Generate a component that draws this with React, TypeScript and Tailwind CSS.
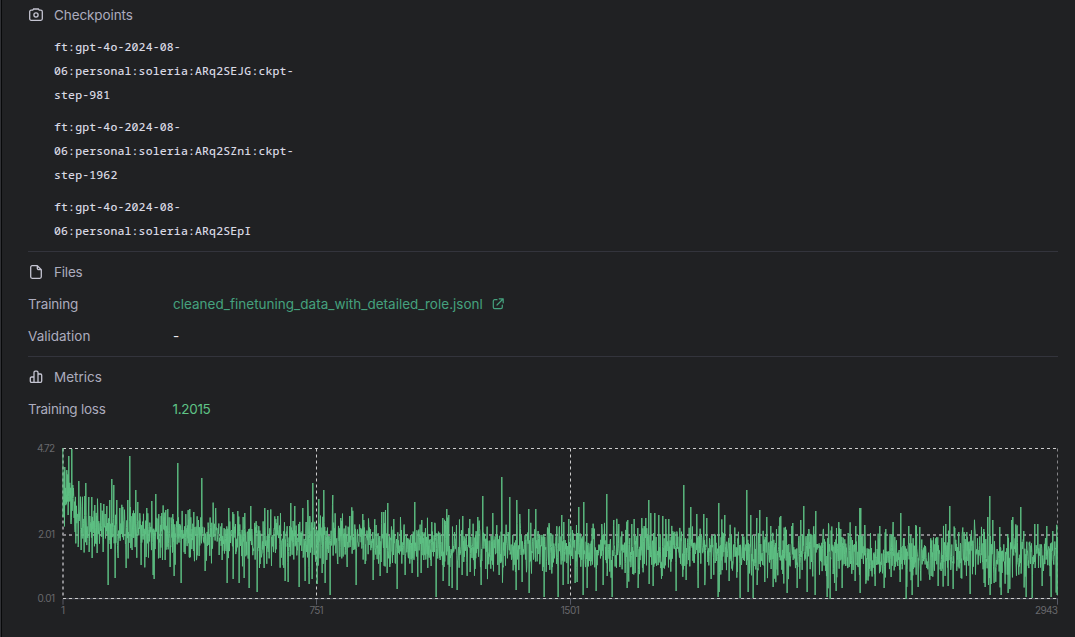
import React from "react";

const SANS = "font-['Inter','Liberation_Sans',sans-serif]";

// [x, y] extremes of the loss curve, in chart pixels
const PEAKS: number[][] = [
  [63,448],[65,467],[69,456],[72,449],[73,485],[79,481],[86,483],[89,497],[92,497],[95,505],[98,512],[101,503],[104,504],[107,506],[110,500],[112,479],[114,485],[117,500],[120,508],[123,507],[128,500],[130,456],[136,490],[138,502],[147,508],[152,501],[156,494],[162,513],[166,510],[168,509],[173,514],[178,463],[190,509],[194,512],[202,478],[216,508],[229,508],[233,512],[238,511],[245,513],[251,506],[265,508],[268,510],
  [278,516],[291,503],[295,506],[303,508],[308,500],[313,483],[319,499],[324,490],[333,495],[341,518],[350,516],[363,514],[382,512],[384,512],[388,503],[394,519],[415,502],[422,520],[432,522],[443,518],[447,509],[449,515],[463,516],[470,519],[478,517],[483,496],[493,513],[502,477],[510,497],[517,500],[520,514],[529,509],[536,509],
  [562,515],[564,522],[569,519],[579,507],[584,502],[587,523],[602,524],[607,494],[614,520],[619,524],[628,520],[632,524],[642,518],[646,518],[649,500],[651,513],[655,513],[659,515],[663,516],[666,519],[669,519],[684,485],[691,507],[697,514],[704,514],[707,518],[719,503],[725,515],[747,490],[751,515],[757,518],[760,510],[767,517],[771,526],[781,516],[793,523],
  [801,520],[804,506],[809,529],[816,511],[829,525],[841,529],[856,526],[860,508],[861,508],[865,525],[880,526],[886,529],[901,513],[909,526],[916,525],[920,527],[946,524],[950,506],[955,528],[959,532],[967,532],[975,528],[984,529],[988,517],[990,496],[993,520],[1000,527],[1012,520],[1013,517],[1017,529],[1021,507],[1024,531],[1035,524],[1038,524],[1047,526],[1053,531],
];
const VALLEYS: number[][] = [
  [63,517],[68,515],[71,524],[75,532],[78,547],[81,550],[89,552],[92,558],[97,553],[103,552],[108,585],[115,578],[118,558],[126,568],[132,550],[141,565],[146,557],[153,575],[154,579],[165,560],[170,567],[174,576],[181,583],[199,556],[205,571],[222,560],[227,583],[233,579],[239,583],[244,578],[249,588],[257,592],[260,564],[264,568],
  [285,581],[288,582],[299,587],[305,581],[309,584],[312,579],[317,584],[322,573],[325,583],[330,595],[347,567],[356,585],[365,564],[373,580],[380,576],[387,573],[397,589],[405,575],[412,573],[421,573],[436,597],[443,581],[449,586],[452,588],[457,590],[462,575],[470,572],[481,585],[499,575],[516,590],[522,582],[529,593],
  [544,597],[558,597],[563,585],[568,584],[575,583],[577,582],[583,595],[587,588],[596,591],[603,585],[607,576],[612,597],[627,588],[635,573],[638,588],[649,584],[653,586],[662,576],[676,591],[686,580],[698,588],[705,579],[711,579],[718,597],[719,592],[729,581],[740,598],[748,592],[753,598],[757,585],[773,587],[787,593],[797,588],
  [807,592],[815,595],[827,597],[830,599],[836,591],[842,588],[855,581],[860,593],[866,582],[875,586],[884,588],[891,577],[900,582],[906,599],[912,595],[918,587],[931,576],[938,586],[948,586],[953,589],[961,578],[970,594],[984,583],[985,587],[990,595],[994,583],[1001,595],[1008,593],[1026,597],[1032,598],[1042,586],[1051,597],[1057,595],
];

function rng(seed: number) {
  let s = seed;
  return () => {
    s = (s * 1664525 + 1013904223) % 4294967296;
    return s / 4294967296;
  };
}

function mean(x: number) {
  const knots = [[63,490],[70,495],[76,516],[90,526],[130,531],[200,536],[300,539],[450,546],[600,549],[750,551],[900,554],[1058,556]];
  for (let i = 1; i < knots.length; i++) {
    const [a, ya] = knots[i - 1];
    const [b, yb] = knots[i];
    if (x <= b) return ya + ((x - a) / (b - a)) * (yb - ya);
  }
  return 556;
}

function buildPath() {
  const rand = rng(42);
  const hi = new Map(PEAKS.map(([x, y]) => [x, y]));
  const lo = new Map(VALLEYS.map(([x, y]) => [x, y]));
  const pts: string[] = [];
  for (let x = 63; x <= 1057; x++) {
    const m = mean(x);
    const spread = 18 + rand() * 12;
    for (let k = 0; k < 3; k++) {
      let y = m + (rand() + rand() + rand() - 1.5) * spread;
      if (k === 0 && hi.has(x)) y = hi.get(x)!;
      if (k === 1 && lo.has(x)) y = lo.get(x)!;
      pts.push(`${(x - 0.2 + k * 0.34).toFixed(2)},${y.toFixed(1)}`);
    }
  }
  return "M" + pts.join("L");
}

const CURVE = buildPath();

function LossChart() {
  return (
    <svg width="1075" height="197" viewBox="0 440 1075 197" className="block shrink-0">
      <g stroke="#565965" strokeWidth="1">
        <path d="M63 598.7H1058M63 598.7v6M316.5 598.7v6M570.5 598.7v6M1057.5 598.7v6" />
      </g>
      <g stroke="#cccccc" strokeWidth="1" strokeDasharray="3 3" fill="none">
        <path d="M63 448.5H1058M63 598.5H1058M316.5 448.5V598M570.5 448.5V598" />
        <path d="M63 535H1058" stroke="#858388" strokeWidth="2" />
        <path d="M63 448.5V598" stroke="#8b8b8f" strokeWidth="2" />
        <path d="M1057.5 448.5V598" stroke="#858588" />
      </g>
      <path d={CURVE} fill="none" stroke="#5dc083" strokeWidth="1" strokeLinejoin="bevel" />
      <g fill="#68686c" fontSize="10" fontFamily="Inter, sans-serif">
        <text x="55" y="452" textAnchor="end" textLength="18">4.72</text>
        <text x="55" y="538" textAnchor="end" textLength="17">2.01</text>
        <text x="55" y="602" textAnchor="end" textLength="17.5">0.01</text>
        <text x="63" y="614" textAnchor="middle">1</text>
        <text x="316.5" y="614" textAnchor="middle" textLength="14">751</text>
        <text x="570.3" y="614" textAnchor="middle" textLength="19">1501</text>
        <text x="1058" y="614" textAnchor="end" textLength="23">2943</text>
      </g>
    </svg>
  );
}

function CameraIcon() {
  return (
    <svg width="16" height="16" viewBox="0 0 16 16" fill="none" stroke="#c5c5d2" strokeWidth="1.3">
      <path d="M3.2 3.2H4.7L5.6 2h4.8l.9 1.2h1.5c.9 0 1.5.6 1.5 1.5v7.1c0 .9-.6 1.5-1.5 1.5H3.2c-.9 0-1.5-.6-1.5-1.5V4.7c0-.9.6-1.5 1.5-1.5Z" />
      <circle cx="8" cy="8" r="2.1" />
    </svg>
  );
}

function FileIcon() {
  return (
    <svg width="16" height="16" viewBox="0 0 16 16" fill="none" stroke="#c5c5d2" strokeWidth="1.3" strokeLinejoin="round">
      <path d="M9.3 1.7H4.2c-.9 0-1.5.6-1.5 1.5v9.6c0 .9.6 1.5 1.5 1.5h7.6c.9 0 1.5-.6 1.5-1.5V5.7ZM9.3 1.7v2.5c0 .9.6 1.5 1.5 1.5h2.5" />
    </svg>
  );
}

function BarsIcon() {
  return (
    <svg width="16" height="16" viewBox="0 0 16 16" fill="none" stroke="#c5c5d2" strokeWidth="1.3" strokeLinejoin="round">
      <path d="M6 13.3H3.5a1.2 1.2 0 0 1-1.2-1.2V9.2A1.2 1.2 0 0 1 3.5 8H6M6 13.3V3.4a1.2 1.2 0 0 1 1.2-1.2h1.6A1.2 1.2 0 0 1 10 3.4v9.9M6 13.3h6.5a1.2 1.2 0 0 0 1.2-1.2V6.2A1.2 1.2 0 0 0 12.5 5H10" />
    </svg>
  );
}

function ExternalIcon() {
  return (
    <svg width="12" height="12" viewBox="0 0 12 12" fill="none" stroke="#45a17e" strokeWidth="1.2" strokeLinecap="round" strokeLinejoin="round">
      <path d="M5 1.7H2.7c-.8 0-1.4.6-1.4 1.4v6.2c0 .8.6 1.4 1.4 1.4h6.2c.8 0 1.4-.6 1.4-1.4V7M7.2.8h4v4M11 1 5 7" />
    </svg>
  );
}

function Heading({ icon, children }: { icon: React.ReactNode; children: React.ReactNode }) {
  return (
    <div className="flex h-8 items-center gap-[10px] text-[13.5px] text-[#acacbe]">
      {icon}
      {children}
    </div>
  );
}

const checkpoints = [
  ["ft:gpt-4o-2024-08-", "06:personal:soleria:ARq2SEJG:ckpt-", "step-981"],
  ["ft:gpt-4o-2024-08-", "06:personal:soleria:ARq2SZni:ckpt-", "step-1962"],
  ["ft:gpt-4o-2024-08-", "06:personal:soleria:ARq2SEpI"],
];

export default function App() {
  return (
    <div className={`flex h-[637px] w-[1075px] flex-col overflow-hidden bg-[#202123] shadow-[inset_1px_0_#303135,inset_2px_0_#08090a] ${SANS}`}>
      <div className="ml-7 mr-[17px] flex h-[252px] shrink-0 flex-col border-b border-[#33343c]">
        <div className="-mt-px shrink-0">
          <Heading icon={<CameraIcon />}><span className="tracking-[-0.1px]">Checkpoints</span></Heading>
        </div>
        <div className="ml-[26px] mt-1 flex flex-col gap-2 font-['Noto_Sans_Mono','DejaVu_Sans_Mono',monospace] text-[11.5px] font-medium leading-6 tracking-[0.15px] text-[#d9d9e3]">
          {checkpoints.map((lines) => (
            <div key={lines[1]}>
              {lines.map((line) => (
                <div key={line} className="whitespace-nowrap">{line}</div>
              ))}
            </div>
          ))}
        </div>
      </div>
      <div className="ml-7 mr-[17px] flex h-[105px] shrink-0 flex-col border-b border-[#33343c] pt-[4px] text-[13.5px] text-[#acacbe]">
        <Heading icon={<FileIcon />}><span className="tracking-[-0.2px]">Files</span></Heading>
        <div className="flex h-8 items-center">
          <div className="w-[145px] tracking-[-0.15px]">Training</div>
          <div className="flex items-center gap-[9px] text-[#45a17e]">
            <span className="tracking-[0.015px]">cleaned_finetuning_data_with_detailed_role.jsonl</span>
            <ExternalIcon />
          </div>
        </div>
        <div className="flex h-8 items-center">
          <div className="w-[145px]">Validation</div>
          <div className="text-[#ececf1]">-</div>
        </div>
      </div>
      <div className="ml-7 mr-[17px] flex h-[83px] shrink-0 flex-col pt-[4px] text-[13.5px] text-[#acacbe]">
        <Heading icon={<BarsIcon />}><span>Metrics</span></Heading>
        <div className="flex h-8 items-center">
          <div className="w-[144.5px] tracking-[-0.25px]">Training loss</div>
          <div className="tracking-[-0.3px] text-[#5fc486]">1.2015</div>
        </div>
      </div>
      <LossChart />
    </div>
  );
}
